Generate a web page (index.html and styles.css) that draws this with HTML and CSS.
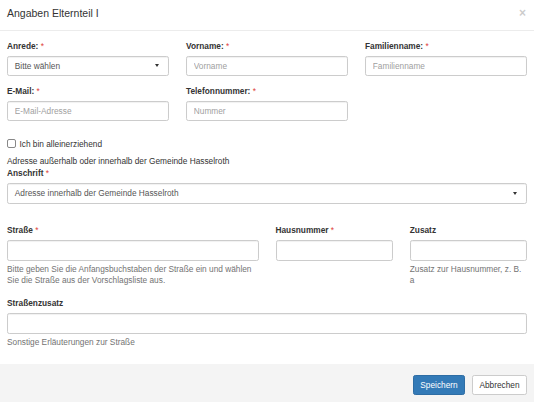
FILE: index.html
```html
<!DOCTYPE html>
<html lang="de">
<head>
<meta charset="utf-8">
<title>Angaben Elternteil I</title>
<link rel="stylesheet" href="styles.css">
</head>
<body>
<div class="modal">
  <div class="modal-header">
    <h4 class="modal-title">Angaben Elternteil I</h4>
    <span class="close">&times;</span>
  </div>
  <div class="modal-body">
    <div class="row">
      <div class="col-4 form-group">
        <label class="lbl">Anrede: <span class="req">*</span></label>
        <div class="control select"><span>Bitte wählen</span><span class="caret"></span></div>
      </div>
      <div class="col-4 form-group">
        <label class="lbl">Vorname: <span class="req">*</span></label>
        <input class="control" type="text" placeholder="Vorname">
      </div>
      <div class="col-4 form-group">
        <label class="lbl">Familienname: <span class="req">*</span></label>
        <input class="control" type="text" placeholder="Familienname">
      </div>
    </div>
    <div class="row">
      <div class="col-4 form-group">
        <label class="lbl">E-Mail: <span class="req">*</span></label>
        <input class="control" type="text" placeholder="E-Mail-Adresse">
      </div>
      <div class="col-4 form-group">
        <label class="lbl">Telefonnummer: <span class="req">*</span></label>
        <input class="control" type="text" placeholder="Nummer">
      </div>
    </div>
    <div class="checkbox"><span class="box"></span><span>Ich bin alleinerziehend</span></div>
    <div class="note">Adresse außerhalb oder innerhalb der Gemeinde Hasselroth</div>
    <div class="form-group anschrift">
      <label class="lbl">Anschrift <span class="req">*</span></label>
      <div class="control select"><span>Adresse innerhalb der Gemeinde Hasselroth</span><span class="caret"></span></div>
    </div>
    <div class="row">
      <div class="col-6 form-group">
        <label class="lbl">Straße <span class="req">*</span></label>
        <input class="control" type="text">
        <div class="help">Bitte geben Sie die Anfangsbuchstaben der Straße ein und wählen Sie die Straße aus der Vorschlagsliste aus.</div>
      </div>
      <div class="col-3 form-group">
        <label class="lbl">Hausnummer <span class="req">*</span></label>
        <input class="control" type="text">
      </div>
      <div class="col-3 form-group">
        <label class="lbl">Zusatz</label>
        <input class="control" type="text">
        <div class="help">Zusatz zur Hausnummer, z. B. a</div>
      </div>
    </div>
    <div class="form-group zusatz">
      <label class="lbl">Straßenzusatz</label>
      <input class="control" type="text">
      <div class="help">Sonstige Erläuterungen zur Straße</div>
    </div>
  </div>
  <div class="modal-footer">
    <button class="btn btn-primary" type="button">Speichern</button>
    <button class="btn btn-default" type="button">Abbrechen</button>
  </div>
</div>
</body>
</html>
```

FILE: styles.css
```css
* { box-sizing: border-box; }
html, body { margin: 0; padding: 0; background: #fff; }
body {
  font-family: "Liberation Sans", Arial, sans-serif;
  font-size: 8.3px;
  color: #333;
}
.modal {
  width: 534px;
  height: 402px;
  overflow: hidden;
  display: flex;
  flex-direction: column;
  background: #fff;
}
.modal-header {
  height: 31px;
  flex: none;
  padding: 6px 7px 0 7px;
  border-bottom: 1px solid #ececec;
  display: flex;
  justify-content: space-between;
  align-items: flex-start;
}
.modal-title {
  margin: 0;
  font-size: 10.5px;
  font-weight: normal;
  line-height: 14px;
  color: #333;
}
.close {
  font-size: 12px;
  font-weight: bold;
  line-height: 14px;
  color: #000;
  opacity: 0.2;
  margin-right: 1px;
}
.modal-body {
  flex: 1;
  padding: 8.5px 7px 0 7px;
}
.row {
  display: grid;
  grid-template-columns: repeat(12, 1fr);
  column-gap: 17px;
}
.col-3 { grid-column: span 3; }
.col-4 { grid-column: span 4; }
.col-6 { grid-column: span 6; }
.form-group { margin-bottom: 8.5px; }
.lbl {
  display: block;
  font-weight: bold;
  line-height: 12px;
  margin-bottom: 4px;
  color: #333;
}
.req { color: #e0403a; font-weight: normal; }
.control {
  display: block;
  width: 100%;
  height: 20.5px;
  padding: 0 6.8px;
  font-family: inherit;
  font-size: 8.3px;
  color: #555;
  background: #fff;
  border: 1px solid #ccc;
  border-radius: 2.3px;
  box-shadow: inset 0 1px 1px rgba(0,0,0,0.06);
  outline: none;
}
.control::placeholder { color: #a0a0a0; }
.select {
  display: flex;
  align-items: center;
  justify-content: space-between;
}
.caret {
  width: 0;
  height: 0;
  border-left: 2.5px solid transparent;
  border-right: 2.5px solid transparent;
  border-top: 3px solid #333;
  margin-right: 2px;
}
.checkbox {
  display: flex;
  align-items: center;
  gap: 4px;
  margin-top: 8px;
  line-height: 12px;
  color: #333;
}
.box {
  width: 8.5px;
  height: 8.5px;
  border: 1px solid #888;
  border-radius: 2px;
  background: #fff;
}
.note {
  margin-top: 5.5px;
  line-height: 12px;
}
.anschrift { margin-bottom: 20.5px; }
.help {
  margin-top: 3px;
  line-height: 11px;
  color: #737373;
}
.zusatz { margin-top: 3px; }
.modal-footer {
  flex: none;
  height: 38px;
  background: #f4f4f4;
  padding: 11px 7px 0 7px;
  display: flex;
  justify-content: flex-end;
  align-items: flex-start;
  gap: 7px;
}
.btn {
  height: 20px;
  font-family: inherit;
  font-size: 8.3px;
  border-radius: 2.3px;
  border: 1px solid;
  padding: 0 5px;
  line-height: 18px;
}
.btn-primary {
  width: 52px;
  background: #337ab7;
  border-color: #2e6da4;
  color: #fff;
}
.btn-default {
  width: 55px;
  background: #fff;
  border-color: #ccc;
  color: #333;
}
```
